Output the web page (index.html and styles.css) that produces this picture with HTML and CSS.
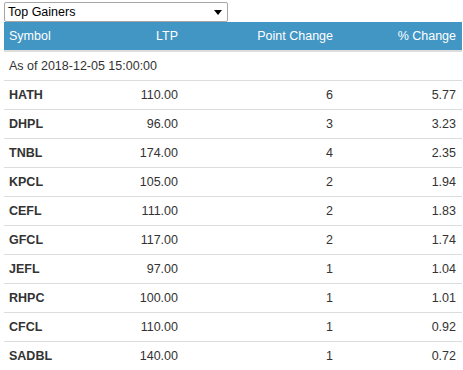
FILE: index.html
```html
<!DOCTYPE html>
<html>
<head>
<meta charset="utf-8">
<link rel="stylesheet" href="styles.css">
</head>
<body>
<div class="wrap">
  <div class="select">
    <span class="select-label">Top Gainers</span>
    <svg class="caret" width="8" height="5" viewBox="0 0 8 5"><path d="M0 0H8L4 5Z" fill="#000"/></svg>
  </div>
  <table class="tbl">
    <colgroup>
      <col class="c1"><col class="c2"><col class="c3"><col class="c4">
    </colgroup>
    <thead>
      <tr class="head">
        <th class="left">Symbol</th>
        <th>LTP</th>
        <th>Point Change</th>
        <th>% Change</th>
      </tr>
    </thead>
    <tbody>
      <tr><td class="left asof" colspan="4">As of 2018-12-05 15:00:00</td></tr>
      <tr><td class="left sym">HATH</td><td>110.00</td><td>6</td><td>5.77</td></tr>
      <tr><td class="left sym">DHPL</td><td>96.00</td><td>3</td><td>3.23</td></tr>
      <tr><td class="left sym">TNBL</td><td>174.00</td><td>4</td><td>2.35</td></tr>
      <tr><td class="left sym">KPCL</td><td>105.00</td><td>2</td><td>1.94</td></tr>
      <tr><td class="left sym">CEFL</td><td>111.00</td><td>2</td><td>1.83</td></tr>
      <tr><td class="left sym">GFCL</td><td>117.00</td><td>2</td><td>1.74</td></tr>
      <tr><td class="left sym">JEFL</td><td>97.00</td><td>1</td><td>1.04</td></tr>
      <tr><td class="left sym">RHPC</td><td>100.00</td><td>1</td><td>1.01</td></tr>
      <tr><td class="left sym">CFCL</td><td>110.00</td><td>1</td><td>0.92</td></tr>
      <tr><td class="left sym">SADBL</td><td>140.00</td><td>1</td><td>0.72</td></tr>
    </tbody>
  </table>
</div>
</body>
</html>
```
FILE: styles.css
```css
html, body {
  margin: 0;
  padding: 0;
  background: #fff;
}
body {
  font-family: "Liberation Sans", Arial, sans-serif;
  color: #333;
}
.wrap {
  padding: 2px 1px 0 4px;
}
.select {
  box-sizing: border-box;
  width: 224px;
  height: 20px;
  border: 1px solid #a6a6a6;
  border-radius: 2px;
  display: flex;
  align-items: center;
  justify-content: space-between;
  padding: 0 5px 0 3px;
  font-size: 12.5px;
  color: #000;
}
.caret {
  display: block;
}
.tbl {
  width: 458px;
  border-collapse: collapse;
  table-layout: fixed;
  font-size: 12.5px;
}
.c1 { width: 90px; }
.c2 { width: 90px; }
.c3 { width: 155px; }
.c4 { width: 123px; }
.tbl th, .tbl td {
  text-align: right;
  padding: 5px 6px 5px 5px;
  line-height: 18px;
  white-space: nowrap;
}
.tbl .left { text-align: left; }
.head th {
  background: #4296c4;
  color: #fff;
  font-weight: normal;
  font-size: 12.5px;
  border-bottom: 2px solid #dddddd;
}
.tbl tbody td {
  border-top: 1px solid #dddddd;
}
.tbl tbody tr:first-child td {
  border-top: 0;
}
.sym { font-weight: bold; }
```
